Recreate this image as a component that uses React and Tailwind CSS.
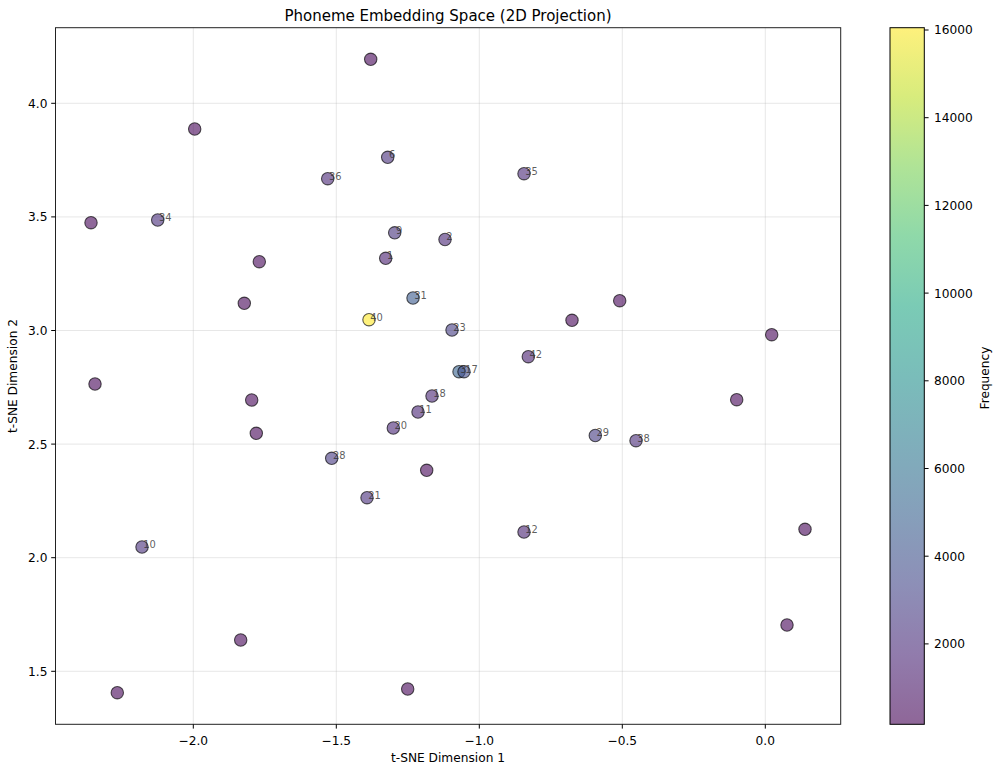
import React from "react";

// viridis colormap stops (0.0 .. 1.0)
const VIRIDIS = [
  "#440154", "#482475", "#414487", "#355f8d", "#2a788e", "#21918c",
  "#22a884", "#44bf70", "#7ad151", "#bddf26", "#fde725",
];
const VMIN = 170;
const VMAX = 16050;

const hexToRgb = (h) => [
  parseInt(h.slice(1, 3), 16),
  parseInt(h.slice(3, 5), 16),
  parseInt(h.slice(5, 7), 16),
];

const viridis = (v) => {
  const t = Math.min(1, Math.max(0, (v - VMIN) / (VMAX - VMIN)));
  const i = Math.min(9, Math.floor(t * 10));
  const f = t * 10 - i;
  const a = hexToRgb(VIRIDIS[i]);
  const b = hexToRgb(VIRIDIS[i + 1]);
  const c = a.map((x, k) => Math.round(x + (b[k] - x) * f));
  return `rgb(${c[0]},${c[1]},${c[2]})`;
};

// [x, y, frequency, label]
const points = [
  [370.7, 59.3, 300, null],
  [194.7, 129, 300, null],
  [387.7, 157.3, 2200, "6"],
  [327.7, 178.7, 1800, "36"],
  [524, 173.7, 1900, "35"],
  [91, 222.7, 300, null],
  [157.7, 220, 2100, "34"],
  [394.7, 232.8, 2400, "9"],
  [445, 239.5, 1800, "2"],
  [259.3, 261.7, 300, null],
  [385.7, 258.3, 1400, "1"],
  [244.3, 303.3, 300, null],
  [413, 298, 4600, "31"],
  [369, 319.7, 16050, "40"],
  [452, 330, 2900, "23"],
  [619.7, 300.7, 300, null],
  [572, 320.3, 300, null],
  [771.7, 334.7, 300, null],
  [95, 384, 300, null],
  [528.3, 356.7, 1500, "42"],
  [459, 371.7, 5000, "3"],
  [464, 371.7, 3700, "17"],
  [251.7, 400, 300, null],
  [432, 396, 1800, "18"],
  [418, 412, 1700, "11"],
  [393.3, 428, 1800, "20"],
  [256.3, 433.3, 300, null],
  [736.7, 399.7, 300, null],
  [595.3, 435.5, 2800, "29"],
  [636, 440.7, 2000, "38"],
  [331.7, 458.3, 2700, "28"],
  [426.7, 470.3, 300, null],
  [367, 497.7, 2100, "21"],
  [524, 532, 1600, "12"],
  [805, 529.3, 300, null],
  [142, 547, 2200, "10"],
  [240.7, 640, 300, null],
  [787, 625, 300, null],
  [117.3, 692.7, 300, null],
  [407.7, 689, 300, null],
];

const AX = { left: 55.5, top: 27.7, right: 840.7, bottom: 724.3 };
const CB = { left: 890, right: 924.3 };

const xTicks = [
  ["−2.0", 193.3],
  ["−1.5", 336.3],
  ["−1.0", 479.3],
  ["−0.5", 622.3],
  ["0.0", 765.3],
];
const yTicks = [
  ["4.0", 103.3],
  ["3.5", 216.9],
  ["3.0", 330.5],
  ["2.5", 444.1],
  ["2.0", 557.7],
  ["1.5", 671.3],
];
const cbTicks = [
  ["16000", 30],
  ["14000", 117.7],
  ["12000", 205.4],
  ["10000", 293.1],
  ["8000", 380.8],
  ["6000", 468.5],
  ["4000", 556.2],
  ["2000", 643.9],
];

const App = () => {
  return (
    <div className="w-[1000px] h-[773px] bg-white font-['DejaVu_Sans',sans-serif] text-black">
      <svg width="1000" height="773" viewBox="0 0 1000 773" className="block">
        <defs>
          <linearGradient id="viridis" x1="0" y1="1" x2="0" y2="0">
            {VIRIDIS.map((c, i) => (
              <stop key={i} offset={i / 10} stopColor={c} stopOpacity="0.6" />
            ))}
          </linearGradient>
        </defs>

        {/* Title */}
        <text x="448" y="20.5" fontSize="15" textAnchor="middle" fill="#000">
          Phoneme Embedding Space (2D Projection)
        </text>

        {/* Grid */}
        {xTicks.map(([l, x]) => (
          <line key={"gx" + l} x1={x} x2={x} y1={AX.top} y2={AX.bottom} stroke="#b0b0b0" strokeOpacity="0.3" strokeWidth="1" />
        ))}
        {yTicks.map(([l, y]) => (
          <line key={"gy" + l} x1={AX.left} x2={AX.right} y1={y} y2={y} stroke="#b0b0b0" strokeOpacity="0.3" strokeWidth="1" />
        ))}

        {/* Points */}
        {points.map(([x, y, f], i) => (
          <circle
            key={"p" + i}
            cx={x}
            cy={y}
            r="6.2"
            fill={viridis(f)}
            fillOpacity="0.6"
            stroke="#000"
            strokeOpacity="0.65"
            strokeWidth="1.1"
          />
        ))}
        {points.map(([x, y, , label], i) =>
          label ? (
            <text key={"t" + i} x={x + 1.2} y={y + 0.8} fontSize="9.9" fill="#333" fillOpacity="0.8">
              {label}
            </text>
          ) : null
        )}

        {/* Axes frame */}
        <rect
          x={AX.left}
          y={AX.top}
          width={AX.right - AX.left}
          height={AX.bottom - AX.top}
          fill="none"
          stroke="#222"
          strokeWidth="1"
        />

        {/* X ticks */}
        {xTicks.map(([l, x]) => (
          <g key={"xt" + l}>
            <line x1={x} x2={x} y1={AX.bottom} y2={AX.bottom + 4.3} stroke="#000" strokeWidth="1" />
            <text x={x} y="744.5" fontSize="12.2" textAnchor="middle" fill="#000">
              {l}
            </text>
          </g>
        ))}
        {/* Y ticks */}
        {yTicks.map(([l, y]) => (
          <g key={"yt" + l}>
            <line x1={AX.left - 4.3} x2={AX.left} y1={y} y2={y} stroke="#000" strokeWidth="1" />
            <text x="47.5" y={y + 4.4} fontSize="12.2" textAnchor="end" fill="#000">
              {l}
            </text>
          </g>
        ))}

        <text x="448" y="761.5" fontSize="12.2" textAnchor="middle" fill="#000">
          t-SNE Dimension 1
        </text>
        <text transform="translate(17.3 376) rotate(-90)" fontSize="12.2" textAnchor="middle" fill="#000">
          t-SNE Dimension 2
        </text>

        {/* Colorbar */}
        <rect
          x={CB.left}
          y={AX.top}
          width={CB.right - CB.left}
          height={AX.bottom - AX.top}
          fill="url(#viridis)"
          stroke="#000"
          strokeWidth="1"
        />
        {cbTicks.map(([l, y]) => (
          <g key={"cb" + l}>
            <line x1={CB.right} x2={CB.right + 4.3} y1={y} y2={y} stroke="#000" strokeWidth="1" />
            <text x="934" y={y + 4.4} fontSize="12.2" fill="#000">
              {l}
            </text>
          </g>
        ))}
        <text transform="translate(989 378) rotate(-90)" fontSize="12.2" textAnchor="middle" fill="#000">
          Frequency
        </text>
      </svg>
    </div>
  );
};

export default App;
